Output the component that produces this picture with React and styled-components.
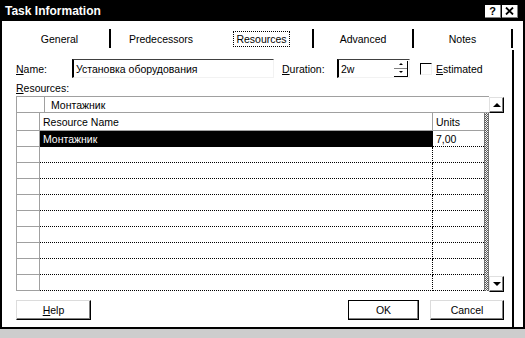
import React from "react";
import styled, { createGlobalStyle } from "styled-components";

const GlobalStyle = createGlobalStyle`
  html, body { margin: 0; padding: 0; background: #cdcdcd; }
  body {
    font-family: "Liberation Sans", Arial, sans-serif;
    font-size: 10.5px;
    color: #000;
  }
  * { box-sizing: border-box; }
`;

const Window = styled.div`
  width: 525px;
  height: 329px;
  background: #fff;
  border: 2px solid #000;
  border-top: 0;
  display: flex;
  flex-direction: column;
`;

const TitleBar = styled.div`
  height: 21px;
  background: #000;
  color: #fff;
  display: flex;
  align-items: center;
  padding: 1px 5px 0 3px;
`;

const Title = styled.span`
  font-weight: bold;
  font-size: 12px;
`;

const CaptionButtons = styled.div`
  margin-left: auto;
  display: flex;
  gap: 1px;
`;

const CaptionButton = styled.div`
  width: 16px;
  height: 13px;
  background: #fff;
  border-right: 1px solid #808080;
  border-bottom: 1px solid #808080;
  color: #000;
  font-weight: bold;
  font-size: 11px;
  display: flex;
  align-items: center;
  justify-content: center;
`;

const TabStrip = styled.div`
  height: 29px;
  display: flex;
  padding-left: 8px;
`;

const Tab = styled.div`
  width: ${(p) => p.$w}px;
  height: 19px;
  margin-top: 8px;
  display: flex;
  align-items: center;
  justify-content: center;
  border-right: ${(p) => (p.$edge ? "2px solid #000" : "0")};
`;

const TabLabel = styled.span`
  padding: 1px 2px;
  border: 1px dotted ${(p) => (p.$focus ? "#000" : "transparent")};
`;

const TabPage = styled.div`
  flex: 1;
  margin-right: 9px;
  border-right: 2px solid #000;
  padding: 9px 8px 0 14px;
  display: flex;
  flex-direction: column;
`;

const FieldRow = styled.div`
  height: 19px;
  display: flex;
  align-items: center;
`;

const Label = styled.span`
  width: ${(p) => (p.$w ? `${p.$w}px` : "auto")};
  margin-left: ${(p) => p.$ml || 0}px;
  flex-shrink: 0;
`;

const Key = styled.span`
  text-decoration: underline;
`;

const Sunken = styled.div`
  width: ${(p) => p.$w}px;
  height: 19px;
  border-top: 1px solid #404040;
  border-left: 2px solid #000;
  border-right: 1px solid #f2f2f2;
  border-bottom: 1px solid #f2f2f2;
  padding-left: 2px;
  display: flex;
  align-items: center;
`;

const Spinner = styled.div`
  margin-left: auto;
  width: 14px;
  height: 16px;
  margin-right: 1px;
  display: flex;
  flex-direction: column;
  border-right: 1px solid #000;
  border-bottom: 1px solid #000;
`;

const SpinHalf = styled.div`
  flex: 1;
  display: flex;
  align-items: center;
  justify-content: center;
  border-bottom: ${(p) => (p.$top ? "1px solid #808080" : "0")};
`;

const Arrow = styled.span`
  width: 0;
  height: 0;
  border-left: ${(p) => p.$s}px solid transparent;
  border-right: ${(p) => p.$s}px solid transparent;
  ${(p) =>
    p.$up
      ? `border-bottom: ${Math.ceil(p.$s * 0.8)}px solid #000;`
      : `border-top: ${Math.ceil(p.$s * 0.8)}px solid #000;`}
`;

const CheckBox = styled.div`
  width: 12px;
  height: 12px;
  margin-left: 10px;
  border-top: 1px solid #000;
  border-left: 1px solid #000;
  border-right: 1px solid #f0f0f0;
  border-bottom: 1px solid #f0f0f0;
  flex-shrink: 0;
`;

const SectionLabel = styled.div`
  height: 18px;
  display: flex;
  align-items: center;
  padding-top: 1px;
`;

const Grid = styled.div`
  width: 488px;
  height: 196px;
  display: flex;
`;

const GridMain = styled.div`
  width: 473px;
  display: flex;
  flex-direction: column;
`;

const EntryRow = styled.div`
  height: 17px;
  display: flex;
  border-top: 1px solid #a0a0a0;
  border-bottom: 1px solid #a0a0a0;
`;

const EntryCorner = styled.div`
  width: 29px;
  border-left: 1px solid #a0a0a0;
  border-right: 1px solid #a0a0a0;
`;

const EntryText = styled.div`
  padding-left: 6px;
  display: flex;
  align-items: center;
`;

const SheetArea = styled.div`
  flex: 1;
  display: flex;
`;

const Sheet = styled.div`
  width: 468px;
  display: flex;
  flex-direction: column;
`;

const Row = styled.div`
  height: ${(p) => (p.$header ? 18 : 16)}px;
  display: grid;
  grid-template-columns: 24px 393px 51px;
`;

const RowHead = styled.div`
  border-left: 1px solid #a0a0a0;
  border-right: 1px solid #a0a0a0;
  border-bottom: 1px solid #a0a0a0;
`;

const Cell = styled.div`
  display: flex;
  align-items: center;
  padding-left: 3px;
  white-space: nowrap;
  overflow: hidden;
  background: ${(p) => (p.$selected ? "#000" : "#fff")};
  color: ${(p) => (p.$selected ? "#fff" : "#000")};
  border-bottom: 1px ${(p) => (p.$header ? "solid #a0a0a0" : "dotted #000")};
  border-right: ${(p) =>
    p.$divider ? (p.$header ? "1px solid #a0a0a0" : "1px dotted #000") : "0"};
`;

const Splitter = styled.div`
  width: 5px;
  height: 178px;
  border-left: 1px solid #707070;
  border-right: 1px solid #707070;
  background: repeating-conic-gradient(#5a5a5a 0 25%, #f4f4f4 0 50%) 0 0 / 2px 2px;
`;

const ScrollColumn = styled.div`
  width: 15px;
  padding-top: 1px;
  display: flex;
  flex-direction: column;
  justify-content: space-between;
`;

const ScrollButton = styled.div`
  width: 15px;
  height: 16px;
  background: #fff;
  border-top: 1px solid #e0e0e0;
  border-left: 1px solid #e0e0e0;
  border-right: 1px solid #000;
  border-bottom: 1px solid #000;
  box-shadow: inset -1px -1px 0 #808080;
  display: flex;
  align-items: center;
  justify-content: center;
`;

const ButtonRow = styled.div`
  margin-top: 8px;
  height: 20px;
  display: flex;
`;

const Button = styled.div`
  width: ${(p) => p.$w}px;
  height: 20px;
  margin-left: ${(p) => p.$ml || 0}px;
  background: #fff;
  display: flex;
  align-items: center;
  justify-content: center;
  border-top: 1px solid ${(p) => (p.$default ? "#000" : "#dcdcdc")};
  border-left: 1px solid ${(p) => (p.$default ? "#000" : "#dcdcdc")};
  border-right: 1px solid #000;
  border-bottom: 1px solid #000;
  box-shadow: inset -1px -1px 0 #808080;
`;

const Spacer = styled.div`
  flex: 1;
`;

const tabs = [
  { label: "General", w: 101, edge: true },
  { label: "Predecessors", w: 100, edge: false },
  { label: "Resources", w: 103, edge: true, focus: true },
  { label: "Advanced", w: 100, edge: true },
  { label: "Notes", w: 99, edge: true },
];

const rows = [
  { name: "Монтажник", units: "7,00", selected: true },
  ...Array.from({ length: 9 }, () => ({ name: "", units: "" })),
];

export default function App() {
  return (
    <>
      <GlobalStyle />
      <Window>
        <TitleBar>
          <Title>Task Information</Title>
          <CaptionButtons>
            <CaptionButton>?</CaptionButton>
            <CaptionButton>
              <svg width="9" height="8" viewBox="0 0 9 8">
                <path d="M1 0.5 L8 7.5 M8 0.5 L1 7.5" stroke="#000" strokeWidth="1.8" />
              </svg>
            </CaptionButton>
          </CaptionButtons>
        </TitleBar>

        <TabStrip>
          {tabs.map((t) => (
            <Tab key={t.label} $w={t.w} $edge={t.edge}>
              <TabLabel $focus={t.focus}>{t.label}</TabLabel>
            </Tab>
          ))}
        </TabStrip>

        <TabPage>
          <FieldRow>
            <Label $w={56}>
              <Key>N</Key>ame:
            </Label>
            <Sunken $w={202}>Установка оборудования</Sunken>
            <Label $w={55} $ml={8}>
              <Key>D</Key>uration:
            </Label>
            <Sunken $w={73}>
              2w
              <Spinner>
                <SpinHalf $top>
                  <Arrow $up $s={2} />
                </SpinHalf>
                <SpinHalf>
                  <Arrow $s={2} />
                </SpinHalf>
              </Spinner>
            </Sunken>
            <CheckBox />
            <Label $ml={4}>
              <Key>E</Key>stimated
            </Label>
          </FieldRow>

          <SectionLabel>
            <span>
              <Key>R</Key>esources:
            </span>
          </SectionLabel>

          <Grid>
            <GridMain>
              <EntryRow>
                <EntryCorner />
                <EntryText>Монтажник</EntryText>
              </EntryRow>
              <SheetArea>
                <Sheet>
                  <Row $header>
                    <RowHead />
                    <Cell $header $divider>
                      Resource Name
                    </Cell>
                    <Cell $header>Units</Cell>
                  </Row>
                  {rows.map((r, i) => (
                    <Row key={i}>
                      <RowHead />
                      <Cell $divider $selected={r.selected}>
                        {r.name}
                      </Cell>
                      <Cell>{r.units}</Cell>
                    </Row>
                  ))}
                </Sheet>
                <Splitter />
              </SheetArea>
            </GridMain>
            <ScrollColumn>
              <ScrollButton>
                <Arrow $up $s={4} />
              </ScrollButton>
              <ScrollButton>
                <Arrow $s={4} />
              </ScrollButton>
            </ScrollColumn>
          </Grid>

          <ButtonRow>
            <Button $w={75}>
              <span>
                <Key>H</Key>elp
              </span>
            </Button>
            <Spacer />
            <Button $w={71} $default>
              OK
            </Button>
            <Button $w={74} $ml={11}>
              Cancel
            </Button>
          </ButtonRow>
        </TabPage>
      </Window>
    </>
  );
}
